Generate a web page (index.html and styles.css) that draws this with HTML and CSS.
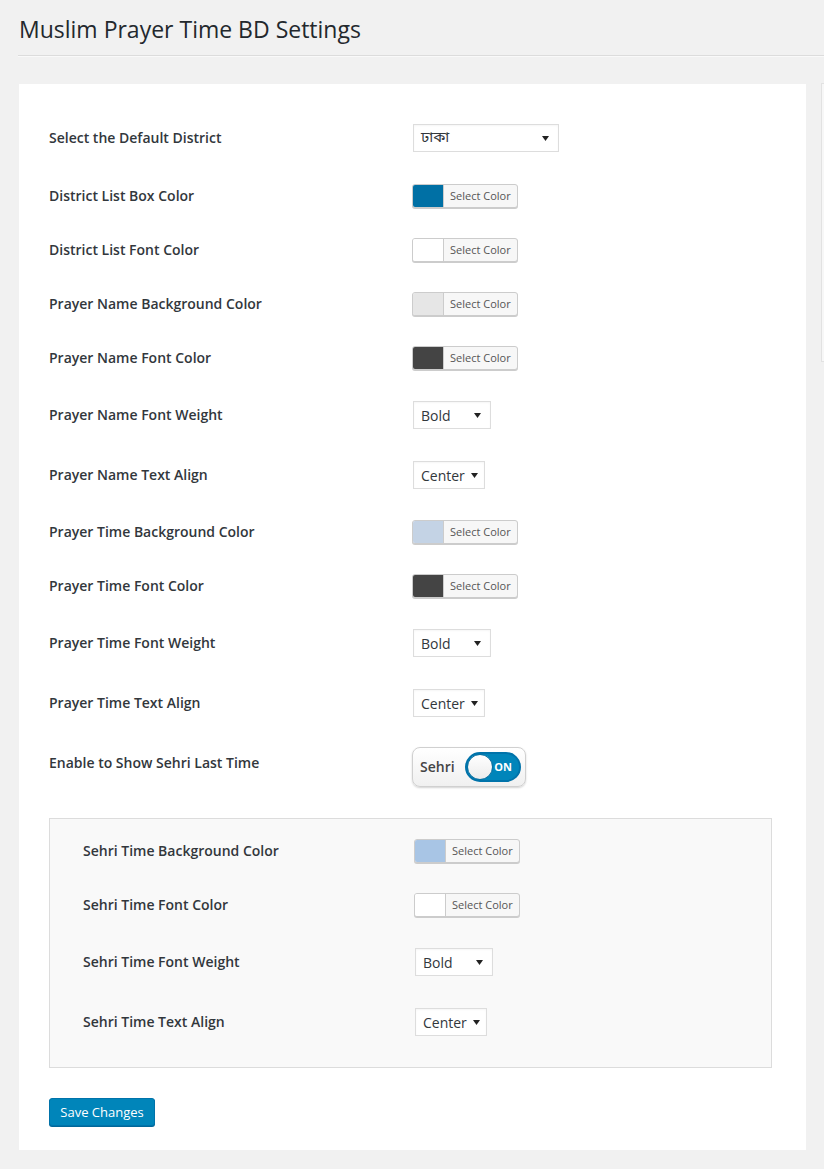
FILE: index.html
```html
<!DOCTYPE html>
<html lang="en">
<head>
<meta charset="utf-8">
<title>Muslim Prayer Time BD Settings</title>
<link rel="stylesheet" href="styles.css">
</head>
<body>
<div class="wrap">
  <h1 class="page-title">Muslim Prayer Time BD Settings</h1>
  <div class="title-rule"></div>
  <div class="layout">
    <form class="card">
      <div class="row row-first">
        <div class="label">Select the Default District</div>
        <div class="select select-district"><span class="bn">ঢাকা</span><svg class="arrow" width="7" height="5" viewBox="0 0 7 5"><path d="M0 0H7L3.5 5Z"/></svg></div>
      </div>
      <div class="row">
        <div class="label">District List Box Color</div>
        <div class="cp"><span class="sw sw-blue"></span><span class="cp-text">Select Color</span></div>
      </div>
      <div class="row">
        <div class="label">District List Font Color</div>
        <div class="cp"><span class="sw sw-white"></span><span class="cp-text">Select Color</span></div>
      </div>
      <div class="row">
        <div class="label">Prayer Name Background Color</div>
        <div class="cp"><span class="sw sw-gray"></span><span class="cp-text">Select Color</span></div>
      </div>
      <div class="row">
        <div class="label">Prayer Name Font Color</div>
        <div class="cp"><span class="sw sw-dark"></span><span class="cp-text">Select Color</span></div>
      </div>
      <div class="row row-tall">
        <div class="label">Prayer Name Font Weight</div>
        <div class="select select-weight"><span>Bold</span><svg class="arrow" width="7" height="5" viewBox="0 0 7 5"><path d="M0 0H7L3.5 5Z"/></svg></div>
      </div>
      <div class="row row-tall">
        <div class="label">Prayer Name Text Align</div>
        <div class="select select-align"><span>Center</span><svg class="arrow" width="7" height="5" viewBox="0 0 7 5"><path d="M0 0H7L3.5 5Z"/></svg></div>
      </div>
      <div class="row">
        <div class="label">Prayer Time Background Color</div>
        <div class="cp"><span class="sw sw-paleblue"></span><span class="cp-text">Select Color</span></div>
      </div>
      <div class="row">
        <div class="label">Prayer Time Font Color</div>
        <div class="cp"><span class="sw sw-dark"></span><span class="cp-text">Select Color</span></div>
      </div>
      <div class="row row-tall">
        <div class="label">Prayer Time Font Weight</div>
        <div class="select select-weight"><span>Bold</span><svg class="arrow" width="7" height="5" viewBox="0 0 7 5"><path d="M0 0H7L3.5 5Z"/></svg></div>
      </div>
      <div class="row row-tall">
        <div class="label">Prayer Time Text Align</div>
        <div class="select select-align"><span>Center</span><svg class="arrow" width="7" height="5" viewBox="0 0 7 5"><path d="M0 0H7L3.5 5Z"/></svg></div>
      </div>
      <div class="row row-tall">
        <div class="label">Enable to Show Sehri Last Time</div>
        <div class="toggle">
          <span class="toggle-label">Sehri</span>
          <span class="switch"><span class="knob"></span><span class="on">ON</span></span>
        </div>
      </div>

      <div class="sehri-box">
        <div class="row">
          <div class="label label-inner">Sehri Time Background Color</div>
          <div class="cp"><span class="sw sw-sky"></span><span class="cp-text">Select Color</span></div>
        </div>
        <div class="row">
          <div class="label label-inner">Sehri Time Font Color</div>
          <div class="cp"><span class="sw sw-white"></span><span class="cp-text">Select Color</span></div>
        </div>
        <div class="row row-tall">
          <div class="label label-inner">Sehri Time Font Weight</div>
          <div class="select select-weight"><span>Bold</span><svg class="arrow" width="7" height="5" viewBox="0 0 7 5"><path d="M0 0H7L3.5 5Z"/></svg></div>
        </div>
        <div class="row row-tall">
          <div class="label label-inner">Sehri Time Text Align</div>
          <div class="select select-align"><span>Center</span><svg class="arrow" width="7" height="5" viewBox="0 0 7 5"><path d="M0 0H7L3.5 5Z"/></svg></div>
        </div>
      </div>

      <div class="actions">
        <button type="button" class="btn-primary">Save Changes</button>
      </div>
    </form>
    <aside class="sidebar"></aside>
  </div>
</div>
</body>
</html>
```

FILE: styles.css
```css
html, body {
  margin: 0;
  padding: 0;
}
body {
  background: #f1f1f1;
  font-family: "Open Sans", "Noto Sans", "Noto Sans Bengali", sans-serif;
  color: #444;
  overflow: hidden;
}
.wrap {
  padding-left: 18px;
}
.page-title {
  margin: 0;
  padding: 15px 0 0 1px;
  font-size: 23px;
  font-weight: 400;
  line-height: 29px;
  color: #23282d;
}
.title-rule {
  margin-top: 11px;
  height: 1px;
  background: #dcdcdc;
  border-bottom: 1px solid #f9f9f9;
}
.layout {
  display: flex;
  align-items: flex-start;
  gap: 15px;
  margin-top: 27px;
}
.card {
  flex: 0 0 auto;
  width: 787px;
  margin: 0 0 0 1px;
  box-sizing: border-box;
  background: #fff;
  padding: 23px 34px 24px 30px;
}
.sidebar {
  flex: 0 0 auto;
  width: 2px;
  height: 277px;
  margin-top: -1px;
  border-left: 1px solid #e2e2e2;
  border-top: 1px solid #e2e2e2;
  border-bottom: 1px solid #e2e2e2;
  background: #f7f7f7;
}
.row {
  display: flex;
  align-items: center;
  height: 54px;
}
.row-first {
  height: 62px;
}
.row-tall {
  height: 60px;
}
.label {
  flex: 0 0 363px;
  font-size: 14px;
  font-weight: 600;
  line-height: 18px;
  color: #32373c;
}
.label-inner {
  flex-basis: 331px;
}
.select {
  box-sizing: border-box;
  height: 28px;
  display: flex;
  align-items: center;
  justify-content: space-between;
  padding: 0 9px 0 7px;
  margin-left: 1px;
  border: 1px solid #ddd;
  background: #fff;
  font-size: 14px;
  color: #32373c;
  box-shadow: inset 0 1px 2px rgba(0,0,0,0.04);
}
.select-district {
  width: 146px;
}
.select-weight {
  width: 78px;
}
.select-align {
  width: 72px;
  padding-right: 6px;
}
.bn {
  font-family: "Noto Sans Bengali", "Lohit Bengali", "Noto Sans", sans-serif;
  font-size: 15px;
}
.arrow {
  fill: #222;
}
.cp {
  box-sizing: border-box;
  width: 106px;
  height: 24px;
  display: flex;
  border: 1px solid #ccc;
  border-radius: 3px;
  background: #f7f7f7;
  box-shadow: 0 1px 0 #ccc;
  overflow: hidden;
}
.sw {
  flex: 0 0 30px;
  border-right: 1px solid #ccc;
}
.sw-blue { background: #0070a5; }
.sw-white { background: #fff; }
.sw-gray { background: #e6e6e6; }
.sw-dark { background: #444; }
.sw-paleblue { background: #c4d3e5; }
.sw-sky { background: #a8c5e5; }
.cp-text {
  padding-left: 6px;
  font-size: 11px;
  line-height: 22px;
  color: #555;
}
.toggle {
  box-sizing: border-box;
  width: 114px;
  height: 40px;
  margin-top: 7px;
  display: flex;
  align-items: center;
  padding: 0 4px 0 7px;
  border: 1px solid #d0d0d0;
  border-radius: 8px;
  background: linear-gradient(#ffffff, #f0f0f0);
  box-shadow: 0 1px 2px rgba(0,0,0,0.18);
}
.toggle-label {
  font-size: 14px;
  font-weight: 600;
  color: #444;
  flex: 1;
}
.switch {
  position: relative;
  box-sizing: border-box;
  width: 56px;
  height: 30px;
  border-radius: 15px;
  background: #0085ba;
  border: 2px solid #0073aa;
  display: flex;
  align-items: center;
  justify-content: flex-end;
  padding-right: 7px;
}
.knob {
  position: absolute;
  left: 0;
  top: 0;
  box-sizing: border-box;
  width: 26px;
  height: 26px;
  border-radius: 50%;
  background: linear-gradient(#ffffff, #ececec);
  border: 1px solid #0b6e9e;
}
.on {
  font-size: 11px;
  font-weight: 700;
  color: #fff;
}
.sehri-box {
  margin-top: 25px;
  border: 1px solid #dcdcdc;
  background: #f9f9f9;
  padding: 5px 0 15px 33px;
}
.sehri-box .cp {
  margin-left: 0;
}
.sehri-box .select {
  margin-left: 1px;
}
.actions {
  margin-top: 30px;
  display: flex;
}
.btn-primary {
  box-sizing: border-box;
  width: 106px;
  height: 28px;
  padding: 0 10px;
  border: 1px solid #0073aa;
  border-radius: 3px;
  background: #0085ba;
  box-shadow: 0 1px 0 #006799;
  color: #fff;
  font-family: "Open Sans", sans-serif;
  font-size: 13px;
  line-height: 26px;
  cursor: pointer;
}
```
